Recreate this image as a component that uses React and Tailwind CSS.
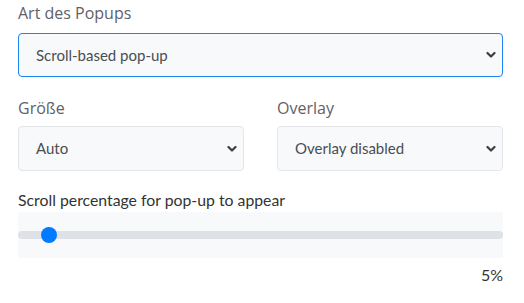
import { useState } from 'react'

function Chevron() {
  return (
    <svg width="10" height="7" viewBox="0 0 10 7" className="pointer-events-none absolute right-[6px] top-1/2 -translate-y-1/2">
      <path d="M1.5 1.5l3.5 3.5 3.5-3.5" fill="none" stroke="#3a3f44" strokeWidth="2.2" strokeLinecap="round" strokeLinejoin="round" />
    </svg>
  )
}

function Select({ value, focused, height = 'h-[44px]' }) {
  return (
    <div
      className={`relative flex items-center ${height} rounded-[4px] border bg-[#f8f9fb] pl-[17px] pr-8 text-[15px] text-[#4a4d52] ${focused ? 'border-[#1b84f2]' : 'border-[#e3e5e8]'}`}
      style={{ fontFamily: 'Lato, sans-serif' }}
    >
      {value}
      <Chevron />
    </div>
  )
}

export default function App() {
  const [pct] = useState(5)
  const label = 'block h-[24px] leading-[24px] text-[16px] text-[#5f6166]'

  return (
    <div className="w-[524px] h-[303px] bg-white pl-[18px] pr-[21px] pt-[1px]" style={{ fontFamily: '"Open Sans", sans-serif' }}>
      <label className={label}>Art des Popups</label>
      <div className="mt-[8px]">
        <Select value="Scroll-based pop-up" focused />
      </div>

      <div className="grid grid-cols-2 gap-[33px] mt-[19px]">
        <div>
          <label className={label}>Größe</label>
          <div className="mt-[6px]">
            <Select value="Auto" height="h-[45px]" />
          </div>
        </div>
        <div>
          <label className={label}>Overlay</label>
          <div className="mt-[6px]">
            <Select value="Overlay disabled" height="h-[45px]" />
          </div>
        </div>
      </div>

      <div className="mt-[19px] text-[15.8px] text-[#333] leading-[20px]" style={{ fontFamily: 'Lato, sans-serif' }}>
        Scroll percentage for pop-up to appear
      </div>
      <div className="mt-[2px] h-[46px] bg-[#f8f9fb] flex items-center">
        <div className="relative w-full h-[8px] rounded-full bg-[#dee2e6]">
          <div
            className="absolute top-1/2 -translate-y-1/2 -translate-x-1/2 w-[16px] h-[16px] rounded-full bg-[#007bff]"
            style={{ left: `${8 + pct * 0.01 * 469}px` }}
          />
        </div>
      </div>
      <div className="mt-[7px] text-right text-[16px] leading-[20px] text-[#333]" style={{ fontFamily: 'Lato, sans-serif' }}>
        {pct}%
      </div>
    </div>
  )
}
